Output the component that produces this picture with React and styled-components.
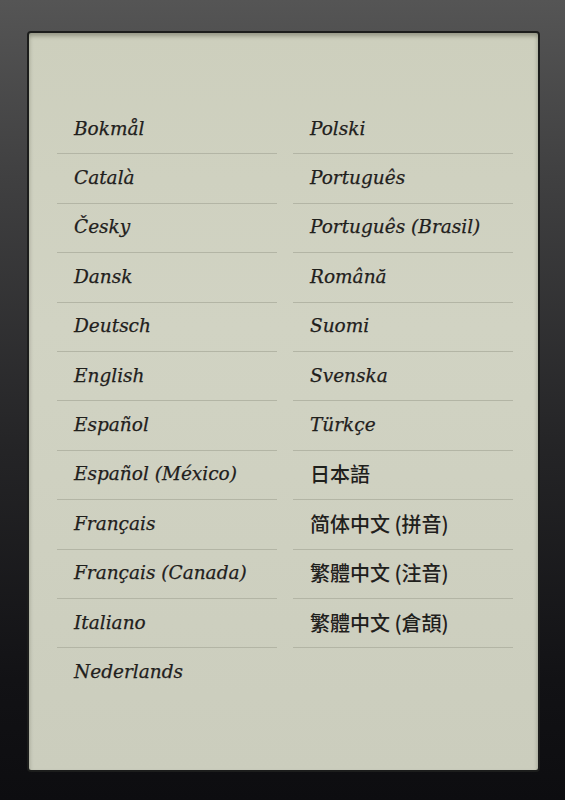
import React from "react";
import styled, { createGlobalStyle } from "styled-components";

const GlobalStyle = createGlobalStyle`
  html, body {
    margin: 0;
    padding: 0;
    background: #1a1a1c;
  }
`;

const Bezel = styled.div`
  width: 565px;
  height: 800px;
  box-sizing: border-box;
  padding: 31px 25px 28px 27px;
  background: linear-gradient(
    180deg,
    #555555 0%,
    #404041 22%,
    #252527 55%,
    #121215 85%,
    #0d0d10 100%
  );
`;

const Screen = styled.div`
  height: 100%;
  box-sizing: border-box;
  padding: 72px 27px 0 28px;
  border: 2px solid #1c1d1c;
  border-radius: 4px;
  background: linear-gradient(180deg, #cdcfbd 0%, #d1d3c3 40%, #cbcdbd 100%);
  box-shadow: inset 0 3px 4px rgba(40, 42, 30, 0.35);
`;

const Columns = styled.div`
  display: grid;
  grid-template-columns: 220px 220px;
  column-gap: 16px;
  align-items: start;
`;

const Column = styled.ul`
  list-style: none;
  margin: 0;
  padding: 0;
`;

const Row = styled.li`
  height: 49.4px;
  box-sizing: border-box;
  display: flex;
  align-items: center;
  padding-left: 17px;
  padding-bottom: 2px;
  border-bottom: 1px solid ${(p) => (p.$last ? "transparent" : "#b3b5a5")};
  color: #1f201c;
  font-family: ${(p) =>
    p.$cjk
      ? '"Noto Sans CJK TC", "Noto Sans CJK SC", sans-serif'
      : '"DejaVu Serif", "Liberation Serif", serif'};
  font-style: ${(p) => (p.$cjk ? "normal" : "italic")};
  font-weight: ${(p) => (p.$cjk ? 500 : 400)};
  font-size: ${(p) => (p.$cjk ? "20px" : "18.5px")};
  -webkit-text-stroke: ${(p) => (p.$cjk ? "0" : "0.25px #1f201c")};
  white-space: nowrap;
`;

const left = [
  "Bokmål",
  "Català",
  "Česky",
  "Dansk",
  "Deutsch",
  "English",
  "Español",
  "Español (México)",
  "Français",
  "Français (Canada)",
  "Italiano",
  "Nederlands",
];

const right = [
  { name: "Polski" },
  { name: "Português" },
  { name: "Português (Brasil)" },
  { name: "Română" },
  { name: "Suomi" },
  { name: "Svenska" },
  { name: "Türkçe" },
  { name: "日本語", cjk: true },
  { name: "简体中文 (拼音)", cjk: true },
  { name: "繁體中文 (注音)", cjk: true },
  { name: "繁體中文 (倉頡)", cjk: true },
];

export default function App() {
  return (
    <>
      <GlobalStyle />
      <Bezel>
        <Screen>
          <Columns>
            <Column>
              {left.map((name, i) => (
                <Row key={name} $last={i === left.length - 1}>
                  {name}
                </Row>
              ))}
            </Column>
            <Column>
              {right.map((lang) => (
                <Row key={lang.name} $cjk={lang.cjk}>
                  {lang.name}
                </Row>
              ))}
            </Column>
          </Columns>
        </Screen>
      </Bezel>
    </>
  );
}
